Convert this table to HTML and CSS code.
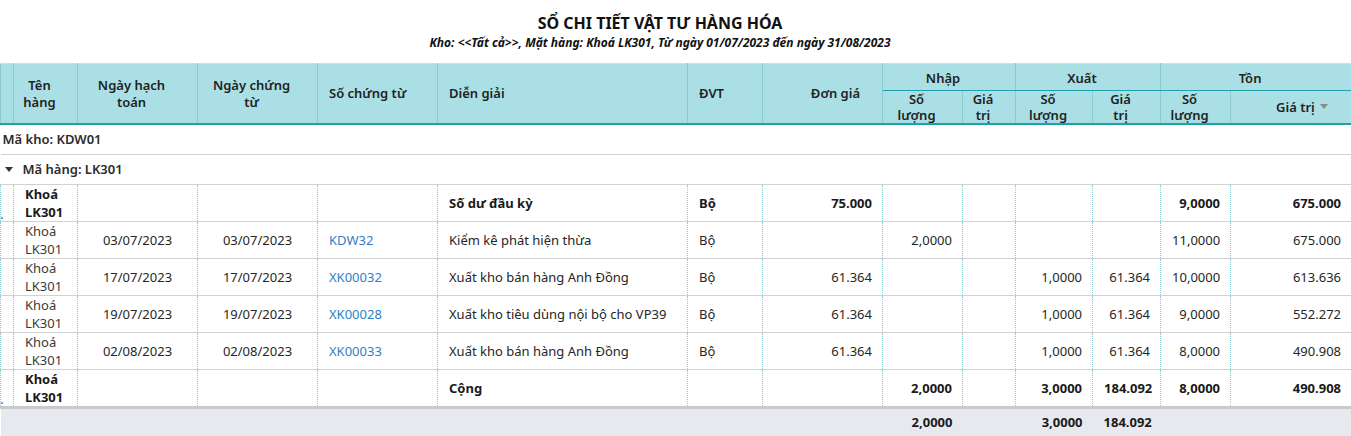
FILE: index.html
```html
<!DOCTYPE html>
<html lang="vi">
<head>
<meta charset="utf-8">
<title>Sổ chi tiết vật tư hàng hóa</title>
<link rel="stylesheet" href="styles.css">
</head>
<body>
<div class="report">
  <div class="report-head">
    <h1 class="title">SỔ CHI TIẾT VẬT TƯ HÀNG HÓA</h1>
    <p class="subtitle">Kho: &lt;&lt;Tất cả&gt;&gt;, Mặt hàng: Khoá LK301, Từ ngày 01/07/2023 đến ngày 31/08/2023</p>
  </div>
  <table class="grid">
    <colgroup>
      <col class="c-sel"><col class="c-name"><col class="c-date"><col class="c-date"><col class="c-doc">
      <col class="c-desc"><col class="c-unit"><col class="c-price"><col class="c-nq"><col class="c-nv">
      <col class="c-xq"><col class="c-xv"><col class="c-tq"><col class="c-tv">
    </colgroup>
    <thead>
      <tr class="hr1">
        <th rowspan="2"></th>
        <th rowspan="2">Tên<br>hàng</th>
        <th rowspan="2">Ngày hạch<br>toán</th>
        <th rowspan="2">Ngày chứng<br>từ</th>
        <th rowspan="2" class="h-left">Số chứng từ</th>
        <th rowspan="2" class="h-left">Diễn giải</th>
        <th rowspan="2" class="h-left">ĐVT</th>
        <th rowspan="2" class="h-right">Đơn giá</th>
        <th colspan="2" class="grp">Nhập</th>
        <th colspan="2" class="grp">Xuất</th>
        <th colspan="2" class="grp">Tồn</th>
      </tr>
      <tr class="hr2">
        <th>Số<br>lượng</th>
        <th>Giá<br>trị</th>
        <th>Số<br>lượng</th>
        <th>Giá<br>trị</th>
        <th>Số<br>lượng</th>
        <th class="h-sort">Giá trị <span class="sort-arrow"></span></th>
      </tr>
    </thead>
    <tbody>
      <tr class="group g1"><td colspan="14">Mã kho: KDW01</td></tr>
      <tr class="group g2"><td colspan="14"><span class="caret"></span>Mã hàng: LK301</td></tr>
      <tr class="row first bold">
        <td class="sel"><span class="mark"></span></td><td>Khoá<br>LK301</td><td></td><td></td><td></td>
        <td>Số dư đầu kỳ</td><td>Bộ</td><td class="num">75.000</td>
        <td></td><td></td><td></td><td></td><td class="num">9,0000</td><td class="num">675.000</td>
      </tr>
      <tr class="row">
        <td class="sel"></td><td class="name">Khoá<br>LK301</td><td class="ctr">03/07/2023</td><td class="ctr">03/07/2023</td><td><span class="link">KDW32</span></td>
        <td>Kiểm kê phát hiện thừa</td><td>Bộ</td><td class="num"></td>
        <td class="num">2,0000</td><td></td><td></td><td></td><td class="num">11,0000</td><td class="num">675.000</td>
      </tr>
      <tr class="row">
        <td class="sel"></td><td class="name">Khoá<br>LK301</td><td class="ctr">17/07/2023</td><td class="ctr">17/07/2023</td><td><span class="link">XK00032</span></td>
        <td>Xuất kho bán hàng Anh Đồng</td><td>Bộ</td><td class="num">61.364</td>
        <td></td><td></td><td class="num">1,0000</td><td class="num">61.364</td><td class="num">10,0000</td><td class="num">613.636</td>
      </tr>
      <tr class="row">
        <td class="sel"></td><td class="name">Khoá<br>LK301</td><td class="ctr">19/07/2023</td><td class="ctr">19/07/2023</td><td><span class="link">XK00028</span></td>
        <td>Xuất kho tiêu dùng nội bộ cho VP39</td><td>Bộ</td><td class="num">61.364</td>
        <td></td><td></td><td class="num">1,0000</td><td class="num">61.364</td><td class="num">9,0000</td><td class="num">552.272</td>
      </tr>
      <tr class="row">
        <td class="sel"></td><td class="name">Khoá<br>LK301</td><td class="ctr">02/08/2023</td><td class="ctr">02/08/2023</td><td><span class="link">XK00033</span></td>
        <td>Xuất kho bán hàng Anh Đồng</td><td>Bộ</td><td class="num">61.364</td>
        <td></td><td></td><td class="num">1,0000</td><td class="num">61.364</td><td class="num">8,0000</td><td class="num">490.908</td>
      </tr>
      <tr class="row bold">
        <td class="sel"><span class="mark"></span></td><td>Khoá<br>LK301</td><td></td><td></td><td></td>
        <td>Cộng</td><td></td><td></td>
        <td class="num">2,0000</td><td></td><td class="num">3,0000</td><td class="num">184.092</td><td class="num">8,0000</td><td class="num">490.908</td>
      </tr>
    </tbody>
    <tfoot>
      <tr class="foot">
        <td></td><td></td><td></td><td></td><td></td><td></td><td></td><td></td>
        <td class="num">2,0000</td><td></td><td class="num">3,0000</td><td class="num">184.092</td><td></td><td></td>
      </tr>
    </tfoot>
  </table>
</div>
</body>
</html>
```
FILE: styles.css
```css
* { box-sizing: border-box; }
html, body { margin: 0; padding: 0; background: #fff; }
body {
  font-family: "Noto Sans", "Open Sans", sans-serif;
  font-size: 13px;
  color: #212121;
  overflow: hidden;
}
.report-head {
  height: 63px;
  display: flex;
  flex-direction: column;
  align-items: center;
  padding: 12px 31px 0 0;
}
.title {
  margin: 0;
  font-size: 16px;
  font-weight: 700;
  line-height: 22px;
  color: #111;
}
.subtitle {
  margin: 0;
  font-size: 12px;
  font-weight: 700;
  font-style: italic;
  line-height: 18px;
  color: #111;
}
.grid {
  width: 1351px;
  table-layout: fixed;
  border-collapse: collapse;
}
.c-sel { width: 13px; }
.c-name { width: 64px; }
.c-date { width: 120px; }
.c-doc { width: 120px; }
.c-desc { width: 250px; }
.c-unit { width: 75px; }
.c-price { width: 120px; }
.c-nq { width: 80px; }
.c-nv { width: 53px; }
.c-xq { width: 77px; }
.c-xv { width: 68px; }
.c-tq { width: 70px; }
.c-tv { width: 121px; }

thead th {
  background: #aadfe5;
  font-weight: 600;
  font-size: 13px;
  line-height: 17px;
  color: #222;
  text-align: center;
  padding: 0 20px 0 8px;
  border-left: 1px solid #8ccbd3;
  border-right: 1px solid #8ccbd3;
}
thead tr.hr1 th { border-top: 1px solid #dcdcdc; border-bottom: 2px solid #1ea1aa; }
thead tr.hr1 { height: 27px; }
thead tr.hr1 th.grp { border-bottom: 1px solid #1ea1aa; padding-top: 2px; }
thead tr.hr2 { height: 33px; }
thead tr.hr2 th { border-bottom: 2px solid #1ea1aa; line-height: 16px; }
thead th.h-left { text-align: left; padding: 0 8px 0 11px; }
thead th.h-right { text-align: right; padding: 0 22px 0 8px; }
thead th.h-sort { text-align: left; padding: 0 8px 0 45px; }
.sort-arrow {
  display: inline-block;
  width: 0; height: 0;
  border-left: 4px solid transparent;
  border-right: 4px solid transparent;
  border-top: 5px solid #8a8a8a;
  vertical-align: 3px;
  margin-left: 2px;
}

tbody td {
  line-height: 18px;
  padding: 0 10px 0 11px;
  border-left: 1px dotted #8ccbd3;
  border-right: 1px dotted #8ccbd3;
  border-bottom: 1px solid #d2d2d2;
  color: #262626;
  white-space: nowrap;
}
tbody tr.row { height: 37px; }
tbody tr.row.first { height: 36px; }
tbody tr.row td.sel { padding: 0; position: relative; }
.mark {
  position: absolute;
  left: 0; bottom: 2px;
  width: 2px; height: 2px;
  background: #5aa9e0;
}
tbody tr.bold td { font-weight: 700; color: #1a1a1a; }
td.num { text-align: right; }
td.ctr { text-align: center; padding: 0 8px; }
.link { color: #2f7fc4; }
td.name { color: #3a3a3a; }

tbody tr.group td {
  border-left: none;
  border-right: none;
  font-weight: 600;
  color: #2b2b2b;
}
tbody tr.g1 { height: 30px; }
tbody tr.g1 td { padding: 0 0 0 2px; }
tbody tr.g2 { height: 30px; }
tbody tr.g2 td { padding: 0 0 0 4px; }
.caret {
  display: inline-block;
  width: 0; height: 0;
  border-left: 4px solid transparent;
  border-right: 4px solid transparent;
  border-top: 5px solid #333;
  vertical-align: 2px;
  margin-right: 10px;
}

tfoot tr.foot { height: 37px; }
tfoot td {
  background: #e8e9ee;
  border-top: 3px solid #c9c9c9;
  font-weight: 700;
  color: #1a1a1a;
  padding: 0 10px 8px 11px;
  line-height: 18px;
}
```
